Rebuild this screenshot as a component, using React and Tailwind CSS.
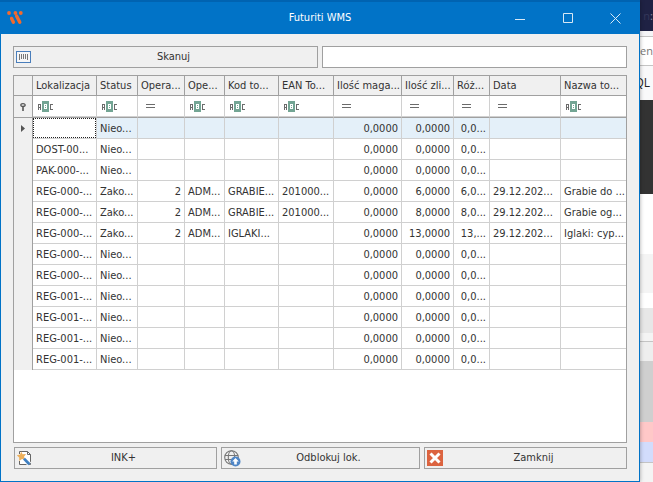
import clsx from 'clsx';

const columns = [
  { key: 'lok', label: 'Lokalizacja', width: 'w-[64px]', filter: 'abc' },
  { key: 'status', label: 'Status', width: 'w-[41px]', filter: 'abc' },
  { key: 'operacja', label: 'Opera...', width: 'w-[47px]', filter: 'eq', right: true },
  { key: 'operator', label: 'Ope...', width: 'w-[40px]', filter: 'abc' },
  { key: 'kod', label: 'Kod to...', width: 'w-[54px]', filter: 'abc' },
  { key: 'ean', label: 'EAN To...', width: 'w-[55px]', filter: 'abc' },
  { key: 'magazyn', label: 'Ilość maga...', width: 'w-[68px]', filter: 'eq', right: true },
  { key: 'zliczona', label: 'Ilość zli...', width: 'w-[52px]', filter: 'eq', right: true },
  { key: 'roznica', label: 'Róż...', width: 'w-[36px]', filter: 'eq', right: true },
  { key: 'data', label: 'Data', width: 'w-[71px]', filter: 'eq' },
  { key: 'nazwa', label: 'Nazwa to...', width: 'w-[65px]', filter: 'abc' },
];

const empty = { status: 'Nieo...', magazyn: '0,0000', zliczona: '0,0000', roznica: '0,0...' };
const done = { status: 'Zako...', operacja: '2', operator: 'ADM...', magazyn: '0,0000', data: '29.12.202...' };

const rows = [
  { ...empty, lok: '' },
  { ...empty, lok: 'DOST-00...' },
  { ...empty, lok: 'PAK-000-...' },
  { ...done, lok: 'REG-000-...', kod: 'GRABIE...', ean: '201000...', zliczona: '6,0000', roznica: '6,0...', nazwa: 'Grabie do ...' },
  { ...done, lok: 'REG-000-...', kod: 'GRABIE...', ean: '201000...', zliczona: '8,0000', roznica: '8,0...', nazwa: 'Grabie og...' },
  { ...done, lok: 'REG-000-...', kod: 'IGLAKI...', zliczona: '13,0000', roznica: '13,...', nazwa: 'Iglaki: cyp...' },
  { ...empty, lok: 'REG-000-...' },
  { ...empty, lok: 'REG-000-...' },
  { ...empty, lok: 'REG-001-...' },
  { ...empty, lok: 'REG-001-...' },
  { ...empty, lok: 'REG-001-...' },
  { ...empty, lok: 'REG-001-...' },
];

function Logo() {
  return (
    <svg width="16" height="14" viewBox="0 0 16 14" stroke="#f26a2e" strokeLinecap="round" fill="#f26a2e">
      <circle cx="2" cy="2" r="1.9" stroke="none" />
      <circle cx="8.4" cy="2" r="1.9" stroke="none" />
      <circle cx="13.8" cy="2" r="1.9" stroke="none" />
      <path d="M4.6 7.4 6.4 11.2M9.6 5 12.8 11.2" strokeWidth="3.4" />
    </svg>
  );
}

function BarcodeIcon() {
  return (
    <svg width="16" height="12" viewBox="0 0 16 12" shapeRendering="crispEdges">
      <rect x="0.5" y="0.5" width="14" height="11" fill="#f6f6f6" stroke="#4a7ebb" />
      <path d="M3.5 3v6M5.5 3v5M7.5 3v5M9.5 3v5M11.5 3v6" stroke="#777" />
    </svg>
  );
}

function WandIcon() {
  return (
    <svg width="16" height="16" viewBox="0 0 16 16" fill="none">
      <path d="M2.5 4V1.5H10.5L13.5 4.5V14.5H2.5V11" fill="#fff" stroke="#666" />
      <path d="M10.5 1.5V4.5H13.5" stroke="#666" />
      <path d="M4.2 1.4 5.6 4.2 9 4 7 6.8 8.4 10 5 9 2.2 11 2.2 7.6 -0.2 5.4 3 4.6Z" fill="#edb05c" />
      <path d="M7 8.6 12.4 14.2" stroke="#fff" strokeWidth="4.6" />
      <path d="M7 8.6 12.4 14.2" stroke="#3f7fc1" strokeWidth="2.8" />
    </svg>
  );
}

function GlobeIcon() {
  return (
    <svg width="17" height="17" viewBox="0 0 17 17" fill="none">
      <g stroke="#777" strokeWidth="1.1">
        <circle cx="7.5" cy="7.5" r="6.8" />
        <ellipse cx="7.5" cy="7.5" rx="3.2" ry="6.8" />
        <path d="M1 5.5h13M1 9.5h13" />
      </g>
      <circle cx="11.5" cy="11.5" r="5" fill="#4f86c6" />
      <path d="M11.5 8 14.8 11.4H12.8V14.6H10.2V11.4H8.2Z" fill="#fff" />
    </svg>
  );
}

function CloseIcon() {
  return (
    <svg width="16" height="16" viewBox="0 0 16 16">
      <path d="M0 0H16V16H0Z" fill="#dc6440" />
      <path d="M3.5 3.5 12.5 12.5M12.5 3.5 3.5 12.5" stroke="#fff" strokeWidth="3" />
    </svg>
  );
}

// Filter operator marks: "contains" for text columns, "equals" for the rest
function ContainsIcon() {
  return (
    <svg width="16" height="11" viewBox="0 0 16 11" shapeRendering="crispEdges" fill="none">
      <path d="M0.5 9V3M2.5 9V3M1 3.5H2M1 6.5H2" stroke="#6b6b6b" />
      <path d="M4 0H11V11H4Z" fill="#73a594" />
      <path d="M6.5 3V8M8.5 3V8M7 3.5H8M7 5.5H8M7 7.5H8" stroke="#fff" />
      <path d="M15 3.5H12.5V8.5H15" stroke="#6b6b6b" />
    </svg>
  );
}

function EqualsIcon() {
  return (
    <svg width="9" height="4" viewBox="0 0 9 4" shapeRendering="crispEdges">
      <path d="M0 0.5H9M0 3.5H9" stroke="#6b6b6b" />
    </svg>
  );
}

function PinIcon() {
  return (
    <svg className="mx-auto" width="6" height="8" viewBox="0 0 6 8" fill="none" stroke="#555">
      <ellipse cx="3" cy="2" rx="2.2" ry="1.4" strokeWidth="1.2" />
      <path d="M3 3.5V8" strokeWidth="1.6" />
    </svg>
  );
}

function GridTable() {
  return (
    <table className="w-full table-fixed border-separate border-spacing-0">
      <thead>
        <tr className="h-[20px]">
          <th className="w-[19px] border-r border-b border-[#a0a0a0] bg-[#f0f0f0]" aria-label="Wiersz" />
          {columns.map((col) => (
            <th
              key={col.key}
              className={clsx(
                col.width,
                'overflow-hidden border-r border-b border-[#a0a0a0] bg-[#f0f0f0] pl-[3px] text-left font-normal whitespace-nowrap last:border-r-0'
              )}
            >
              {col.label}
            </th>
          ))}
        </tr>
        <tr className="h-[22px]">
          <td className="border-r border-b border-[#a0a0a0] bg-[#f0f0f0]">
            <PinIcon />
          </td>
          {columns.map((col) => (
            <td key={col.key} className="border-r border-b border-r-[#d0d0d0] border-b-[#a0a0a0] last:border-r-0">
              <div className={clsx('flex h-[21px] items-center border-b border-[#d0d0d0]', col.filter === 'abc' ? 'pl-[5px]' : 'pl-2')}>
                {col.filter === 'abc' ? <ContainsIcon /> : <EqualsIcon />}
              </div>
            </td>
          ))}
        </tr>
      </thead>
      <tbody>
        {rows.map((row, i) => (
          <tr key={i} className={clsx('h-[21px]', i === 0 && 'bg-[#e4f0f9]')}>
            <td className="border-r border-[#a0a0a0] bg-[#f0f0f0]">
              {i === 0 && (
                <svg className="mx-auto" width="4" height="7" viewBox="0 0 4 7">
                  <path d="M0 0 4 3.5 0 7Z" fill="#555" />
                </svg>
              )}
            </td>
            {columns.map((col) => (
              <td
                key={col.key}
                className={clsx(
                  'overflow-hidden border-r border-b border-[#d0d0d0] whitespace-nowrap last:border-r-0',
                  i === 0 && col.key === 'lok' ? 'bg-white' : 'px-[3px] pt-0.5',
                  col.right && 'text-right'
                )}
              >
                {i === 0 && col.key === 'lok' ? <div className="h-[20px] border border-dotted border-[#222]" /> : row[col.key]}
              </td>
            ))}
          </tr>
        ))}
      </tbody>
    </table>
  );
}

function ActionButton({ icon, children, className }) {
  return (
    <button type="button" className={clsx('flex h-[22px] items-center border border-[#a0a0a0] bg-[#f0f0f0] px-0.5', className)}>
      <span className="w-4 shrink-0">{icon}</span>
      <span className="flex-1">{children}</span>
    </button>
  );
}

function TitleBar() {
  return (
    <header className="grid h-[34px] grid-cols-3 items-center border-t-2 border-[#0063b1] bg-[#0173c7] text-white">
      <div className="pl-[7px]">
        <Logo />
      </div>
      <h1 className="text-center">Futuriti WMS</h1>
      <div className="flex justify-end">
        <button type="button" aria-label="Minimalizuj" className="flex h-8 w-12 items-center justify-center">
          <svg width="10" height="11" viewBox="0 0 10 11"><path d="M0 6.5H10" stroke="#d8e8f5" /></svg>
        </button>
        <button type="button" aria-label="Maksymalizuj" className="flex h-8 w-12 items-center justify-center">
          <svg width="10" height="10" viewBox="0 0 10 10"><path d="M0.5 0.5H9.5V9.5H0.5Z" fill="none" stroke="#d8e8f5" /></svg>
        </button>
        <button type="button" aria-label="Zamknij okno" className="flex h-8 w-12 items-center justify-center">
          <svg width="11" height="11" viewBox="0 0 11 11"><path d="M0.5 0.5 10.5 10.5M10.5 0.5 0.5 10.5" stroke="#d8e8f5" /></svg>
        </button>
      </div>
    </header>
  );
}

// Sliver of the browser that stays visible beside the window
function Backdrop() {
  return (
    <aside className="flex w-[13px] shrink-0 flex-col overflow-hidden bg-[#f4f4f4] font-['Open_Sans',sans-serif]">
      <div className="flex h-[31px] items-center justify-end bg-[#1f2244] text-[11px]">
        <span className="text-[#34375a]">n</span>
        <span className="text-[#8a8ca0]">:</span>
      </div>
      <div className="h-[5px] bg-[#f5f5f7]" />
      <div className="flex h-[30px] items-center justify-end border-y border-[#c4c4c4] bg-white text-[11px] text-[#777]">en</div>
      <div className="flex h-[34px] items-center justify-end bg-[#f9f9fa] pr-[3px] text-[12px] text-[#222]">QL</div>
      <div className="h-[94px] bg-[#333]" />
      <div className="h-[60px] bg-white" />
      <div className="h-[39px] bg-[#f4f4f4]" />
      <div className="h-[15px] bg-white" />
      <div className="h-[25px] bg-[#e7e7e7]" />
      <div className="h-[9px] border-b border-[#c4c4c4] bg-[#f4f4f4]" />
      <div className="h-[19px] bg-[#eee]" />
      <div className="h-[61px] bg-[#cfcfcf]" />
      <div className="h-[20px] bg-[#ffc8c8]" />
      <div className="h-[21px] border-b border-[#c4c4c4] bg-[#d2dcfc]" />
    </aside>
  );
}

export default function App() {
  return (
    <div className="flex min-h-screen overflow-hidden font-['DejaVu_Sans_Condensed','DejaVu_Sans',sans-serif] text-[11px] leading-[14px] text-[#333]">
      <main className="relative flex min-w-0 flex-1 flex-col bg-[#f0f0f0] shadow-[0_0_4px_rgba(0,0,0,0.35)]">
        <TitleBar />
        <div className="flex flex-1 flex-col border border-t-0 border-[#0173c7] p-3">
          <div className="grid grid-cols-2 gap-1">
            <ActionButton icon={<BarcodeIcon />}>Skanuj</ActionButton>
            <input type="text" aria-label="Kod" className="h-[22px] w-full min-w-0 border border-[#a0a0a0] bg-white px-1 outline-none" />
          </div>

          <div className="mt-[7px] flex-1 border border-[#a0a0a0] bg-white">
            <GridTable />
          </div>

          <div className="mt-1 ml-px flex gap-1">
            <ActionButton icon={<WandIcon />} className="flex-1">INK+</ActionButton>
            <ActionButton icon={<GlobeIcon />} className="w-[199px]">Odblokuj lok.</ActionButton>
            <ActionButton icon={<CloseIcon />} className="flex-1">Zamknij</ActionButton>
          </div>
        </div>
      </main>
      <Backdrop />
    </div>
  );
}
